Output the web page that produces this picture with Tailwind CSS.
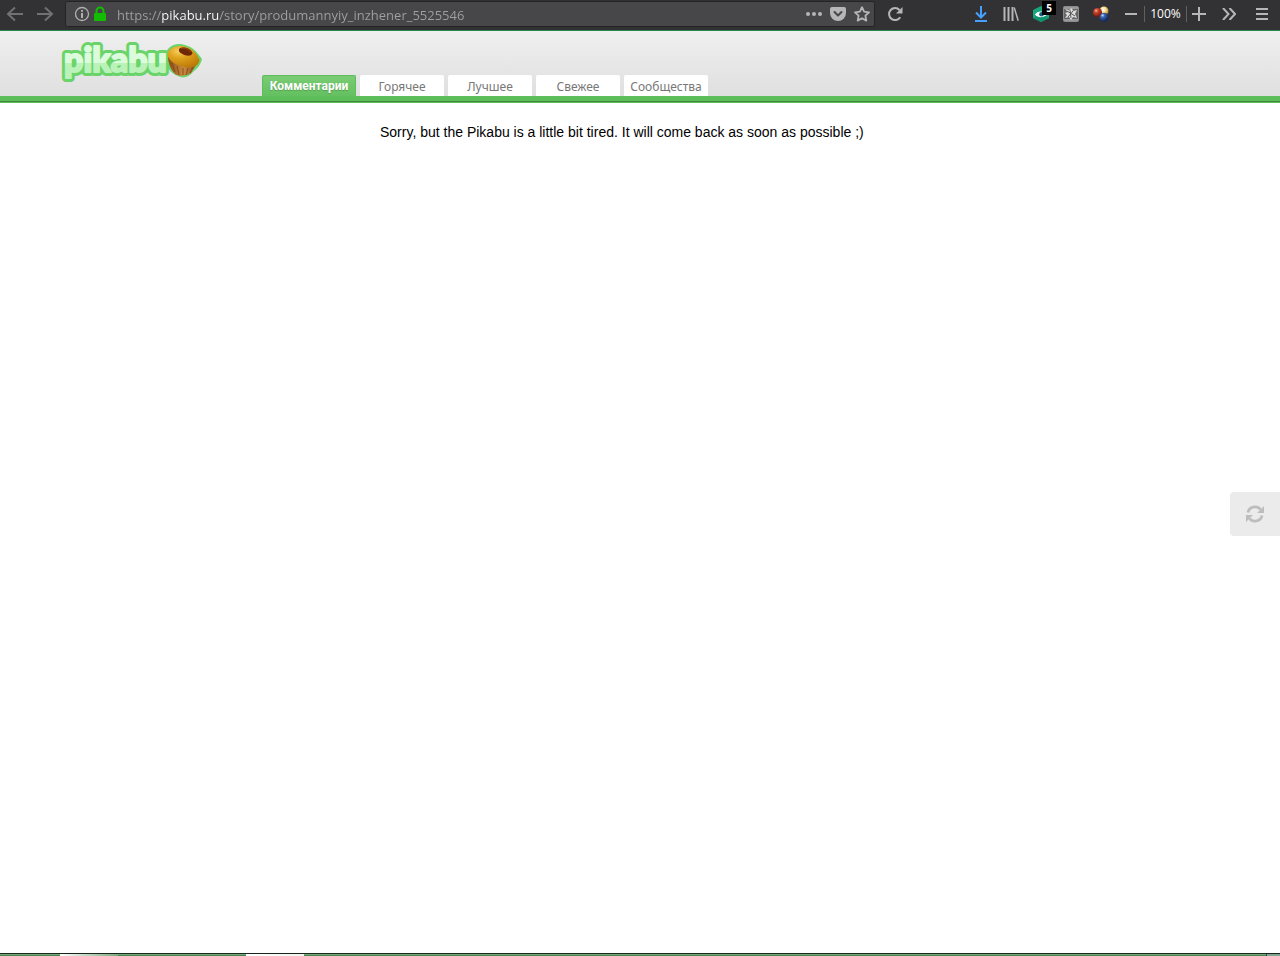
<!DOCTYPE html>
<html lang="ru">
<head>
<meta charset="utf-8">
<meta name="viewport" content="width=device-width, initial-scale=1">
<title>Pikabu</title>
<script src="https://cdn.jsdelivr.net/npm/@tailwindcss/browser@4"></script>
</head>
<body class="flex min-h-screen flex-col bg-white font-['Open_Sans',sans-serif]">

<!-- Browser toolbar -->
<div class="flex h-[31px] shrink-0 items-stretch border-b border-[#24884a] bg-[#323234] text-[#b6b6b8]">
  <button aria-label="Back" class="grid w-[30px] place-items-center pb-[2px] text-[#717173]"><svg width="18" height="16" viewBox="0 0 18 16" fill="none" stroke="currentColor" stroke-width="2"><path d="M17 8H2M9 1.500 2 8l7 6.500"/></svg></button>
  <button aria-label="Forward" class="grid w-[30px] place-items-center pb-[2px] text-[#717173]"><svg width="18" height="16" viewBox="0 0 18 16" fill="none" stroke="currentColor" stroke-width="2"><path d="M1 8h15M9 1.500 16 8l-7 6.500"/></svg></button>
  <div class="mt-px mb-[3px] ml-[5px] flex min-w-0 flex-1 items-center rounded-xs border border-[#242426] bg-[#474749] pl-2">
    <svg class="shrink-0" width="16" height="16" viewBox="0 0 16 16" fill="none" stroke="#b1b1b3" stroke-width="1.300"><circle cx="8" cy="8" r="6.500"/><path d="M8 7v5M8 4v1.800" stroke-width="2"/></svg>
    <svg class="ml-[3px] shrink-0" width="14" height="16" viewBox="0 0 14 16"><path d="M3.500 8V5a3.500 3.500 0 0 1 7 0v3" fill="none" stroke="#12bc00" stroke-width="2"/><rect x="1" y="7" width="12" height="8" rx="1" fill="#12bc00"/></svg>
    <input aria-label="Address" value="https://pikabu.ru/story/produmannyiy_inzhener_5525546" class="ml-[10px] min-w-0 flex-1 bg-linear-[90deg,#a0a0a2_45px,#ffffff_45px,#ffffff_102px,#a0a0a2_102px] bg-clip-text pt-[2px] text-[13px] leading-5 text-transparent outline-none">
    <button aria-label="Page actions" class="grid w-6 place-items-center"><svg width="16" height="4" viewBox="0 0 16 4" fill="currentColor"><circle cx="2" cy="2" r="2"/><circle cx="8" cy="2" r="2"/><circle cx="14" cy="2" r="2"/></svg></button>
    <button aria-label="Save to Pocket" class="grid w-6 place-items-center"><svg width="16" height="14" viewBox="0 0 16 14"><path d="M2 0h12a2 2 0 0 1 2 2v4a8 8 0 0 1-16 0V2a2 2 0 0 1 2-2z" fill="currentColor"/><path d="m4.500 5 3.500 3.500L11.500 5" fill="none" stroke="#474749" stroke-width="2" stroke-linecap="round" stroke-linejoin="round"/></svg></button>
    <button aria-label="Bookmark" class="grid w-6 place-items-center"><svg width="16" height="16" viewBox="0 0 16 16" fill="none" stroke="currentColor" stroke-width="1.800" stroke-linejoin="round"><path d="m8 1.200 2.100 4.500 4.900.6-3.600 3.400.9 4.900L8 12.200l-4.300 2.400.9-4.900L1 6.300l4.900-.6z"/></svg></button>
  </div>
  <button aria-label="Reload" class="ml-[5px] grid w-[30px] place-items-center pb-[2px]"><svg width="16" height="16" viewBox="0 0 16 16"><path d="M13.200 11.200A6 6 0 1 1 12.500 4" fill="none" stroke="currentColor" stroke-width="2"/><path d="M15.500 1v6.500H9z" fill="currentColor"/></svg></button>
  <div class="flex pl-14 pb-[2px]">
    <button aria-label="Downloads" class="grid w-[30px] place-items-center text-[#45a1ff]"><svg width="14" height="16" viewBox="0 0 14 16" fill="none" stroke="currentColor" stroke-width="2"><path d="M7 0v11M2 6.500l5 5 5-5M1 15h12"/></svg></button>
    <button aria-label="Library" class="grid w-[30px] place-items-center"><svg width="16" height="14" viewBox="0 0 16 14" fill="none" stroke="currentColor" stroke-width="2"><path d="M1.500 0v14M5.500 0v14M9.500 0v14"/><path d="m11.200.5 4 13.200" stroke-width="1.500"/></svg></button>
    <button aria-label="Privacy extension, 5 blocked" class="relative grid w-[30px] place-items-center"><svg width="16" height="16" viewBox="0 0 16 16"><path d="m8 0 8 4v8l-8 4-8-4V4z" fill="#18a77b"/><path d="m8 16-8-4 4-2h8l4 2z" fill="#0f9470"/><path d="M2 8.500C4.500 4.500 11 4.500 14 8.500 11 12 4.500 12 2 8.500z" fill="#fff"/><circle cx="8.500" cy="8.300" r="2.300" fill="#126481"/></svg><span class="absolute left-4 top-px grid h-[14px] w-[14px] place-items-center bg-black text-[10px] font-bold text-white">5</span></button>
    <button aria-label="Script extension" class="grid w-[30px] place-items-center"><svg width="16" height="16" viewBox="0 0 16 16"><rect x=".5" y=".5" width="15" height="15" rx="1" fill="#666" stroke="#8c8c8c"/><path d="M1 1h14v2H1zM1 13h14v2H1z" fill="#999"/><path d="m2 3 4 1 3-2 1 3 4-1-2 4 2 4-4-1-2 3-2-3-4 1 2-3-2-2 3-1z" fill="#dedede"/><path d="m4 5 8 5M10 5l-5 6M7 4l1 8" stroke="#555" fill="none"/></svg></button>
    <button aria-label="Color extension" class="grid w-[30px] place-items-center"><svg width="16" height="16" viewBox="0 0 16 16"><defs><radialGradient id="red" cx=".35" cy=".3" r=".65"><stop stop-color="#f3c0b0"/><stop offset=".3" stop-color="#d24a33"/><stop offset="1" stop-color="#7a160c"/></radialGradient><radialGradient id="yellow" cx=".4" cy=".35" r=".65"><stop stop-color="#fff"/><stop offset=".5" stop-color="#f7dd8c"/><stop offset="1" stop-color="#b5802a"/></radialGradient><radialGradient id="blue" cx=".35" cy=".3" r=".65"><stop stop-color="#dbe6fa"/><stop offset=".3" stop-color="#4169b5"/><stop offset="1" stop-color="#102a63"/></radialGradient></defs><circle cx="11" cy="5" r="4.500" fill="url(#yellow)"/><circle cx="4.500" cy="6.500" r="4.500" fill="url(#red)"/><circle cx="11" cy="11.200" r="4.500" fill="url(#blue)"/></svg></button>
    <button aria-label="Zoom out" class="grid w-7 place-items-center pl-px"><svg width="12" height="2"><path d="M0 0h12v2H0z" fill="currentColor"/></svg></button>
    <span class="my-[6px] w-px bg-[#606062]"></span>
    <button class="w-[41px] text-center text-[12px] font-medium text-white">100%</button>
    <span class="my-[6px] w-px bg-[#606062]"></span>
    <button aria-label="Zoom in" class="grid w-6 place-items-center"><svg width="14" height="14" viewBox="0 0 14 14" stroke="currentColor" stroke-width="2"><path d="M0 7h14M7 0v14"/></svg></button>
    <button aria-label="More tools" class="ml-[3px] grid w-[30px] place-items-center"><svg width="14" height="12" viewBox="0 0 14 12" fill="none" stroke="currentColor" stroke-width="2"><path d="m1 0 5.500 6L1 12M7.500 0 13 6l-5.500 6"/></svg></button>
    <button aria-label="Menu" class="mx-[3px] grid w-[30px] place-items-center"><svg width="12" height="12" viewBox="0 0 12 12" stroke="currentColor" stroke-width="2"><path d="M0 1h12M0 6h12M0 11h12"/></svg></button>
  </div>
</div>

<!-- Site header -->
<header class="bg-linear-to-b from-[#efefef] to-[#dedede]">
  <div class="flex h-[65px] items-end pl-[58px]">
    <a href="#" aria-label="Pikabu" class="mr-[56px] self-start pt-[7px]">
      <svg width="148" height="48" viewBox="0 0 148 48" role="img">
        <defs>
          <linearGradient id="letters" gradientUnits="userSpaceOnUse" x1="0" y1="8" x2="0" y2="42"><stop offset=".5" stop-color="#dcfbdc"/><stop offset=".5" stop-color="#baf2ba"/></linearGradient>
          <radialGradient id="top" cx=".35" cy=".25" r=".8"><stop stop-color="#f6cf62"/><stop offset=".4" stop-color="#dfa31c"/><stop offset="1" stop-color="#bd7a08"/></radialGradient>
          <linearGradient id="cup" x1="0" x2="1"><stop stop-color="#8b4a14"/><stop offset=".55" stop-color="#c98a42"/><stop offset="1" stop-color="#96551a"/></linearGradient>
        </defs>
        <text x="6" y="34" font-family="Lato, sans-serif" font-weight="900" font-size="34" fill="#6ad46b" stroke="#6ad46b" stroke-width="8" stroke-linejoin="round">pikabu</text>
        <path d="M107 17c2-8 10-13 20-10 8 2 12 7 17 14-1 5-4 9-9 13-4 5-10 7-15 4-8-3-13-10-13-21z" fill="#6ad46b"/>
        <text x="6" y="34" font-family="Lato, sans-serif" font-weight="900" font-size="34" fill="url(#letters)" stroke="url(#letters)" stroke-width="2" stroke-linejoin="round">pikabu</text>
        <path d="M110 18c8 8 19 10 28 9l-5 8c-4 3-12 4-16 1-4-4-7-11-7-18z" fill="url(#cup)"/>
        <path d="m114 25 3 9M119 28l2 9M125 30v7M130 30l-2 7M135 29l-3 6" stroke="#7d430f" stroke-width=".8" fill="none"/>
        <path d="M109.500 18c-.5-7 6-10 14.500-10 9 1 15 7 17.500 14-.5 4-3.500 7-8 7-10 1-20-3-24-11z" fill="url(#top)"/>
        <path d="M121 11c3-3 12-1 13.500 4-1 4-7 3-10 1-2-1-4-2-3.500-5z" fill="#6f2805"/><path d="M123 10.500c3-1 7 0 9.500 3.500" stroke="#9a4a20" fill="none"/>
      </svg>
    </a>
    <nav class="flex gap-1 font-['Noto_Sans',sans-serif] text-[12px] leading-[21px] text-[#777777]">
      <a href="#" class="h-[21px] w-[94px] rounded-t-xs border border-b-0 border-[#5cbd5a] bg-linear-to-b from-[#7acc74] to-[#63c05f] text-center font-['Roboto',sans-serif] font-bold text-white text-shadow-xs">Комментарии</a>
      <a href="#" class="h-[21px] w-[84px] rounded-t-xs bg-white pt-px text-center">Горячее</a>
      <a href="#" class="h-[21px] w-[84px] rounded-t-xs bg-white pt-px text-center">Лучшее</a>
      <a href="#" class="h-[21px] w-[84px] rounded-t-xs bg-white pt-px text-center">Свежее</a>
      <a href="#" class="h-[21px] w-[84px] rounded-t-xs bg-white pt-px text-center">Сообщества</a>
    </nav>
  </div>
  <div class="h-[7px] bg-[#5cbd5a] pt-[5px]"><div class="h-px bg-[#3f873d]"></div></div>
</header>

<main class="flex-1 pl-[380px] pt-[19px] font-['Liberation_Sans',sans-serif] text-[14px] leading-5 text-black">
  <p>Sorry, but the Pikabu is a little bit tired. It will come back as soon as possible ;)</p>
</main>

<!-- Floating refresh control -->
<button aria-label="Refresh" class="fixed right-0 top-[492px] grid h-11 w-[50px] place-items-center rounded-l-sm bg-[#ebebeb] text-[#bdbdbd]"><svg width="18" height="18" viewBox="0 0 18 18"><path d="M2 7.500C3 1.500 11 0 14.500 4.500M16 10.500c-1 6-9 7.500-12.500 3" fill="none" stroke="currentColor" stroke-width="2.800"/><path d="M18 1v7h-7zM0 17v-7h7z" fill="currentColor"/></svg></button>

<!-- Top edge of the taskbar -->
<footer class="flex h-[3px] shrink-0 border-t border-[#17251b] bg-linear-to-b from-[#8bbd8f] to-[#2f7140]">
  <span class="ml-[60px] w-[58px] bg-linear-to-r from-white to-[#79aa7f]"></span>
  <span class="ml-[128px] w-[58px] bg-linear-to-r from-white to-[#edf3ed]"></span>
  <span class="ml-auto w-[14px] border-l border-[#33483b] bg-[#7da591]"></span>
</footer>
</body>
</html>
